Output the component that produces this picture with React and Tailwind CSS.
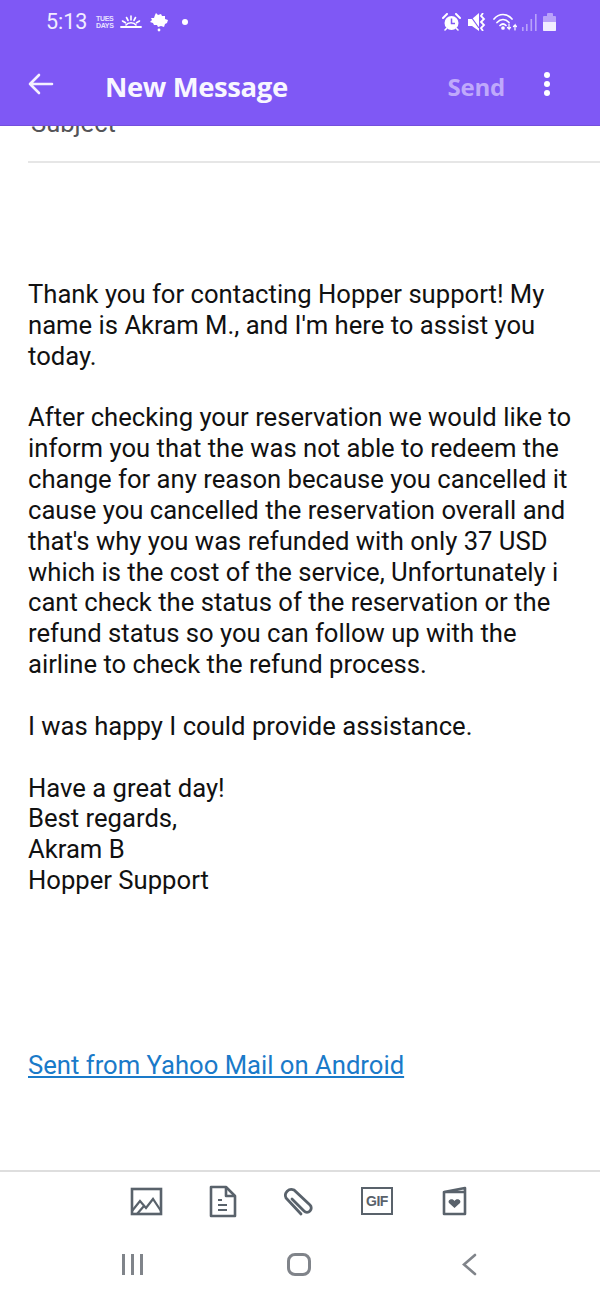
import React from 'react';

const bodyText = [
  ["Thank you for contacting Hopper support! My", "name is Akram M., and I'm here to assist you", "today."],
  [
    "After checking your reservation we would like to",
    "inform you that the was not able to redeem the",
    "change for any reason because you cancelled it",
    "cause you cancelled the reservation overall and",
    "that's why you was refunded with only 37 USD",
    "which is the cost of the service, Unfortunately i",
    "cant check the status of the reservation or the",
    "refund status so you can follow up with the",
    "airline to check the refund process.",
  ],
  ["I was happy I could provide assistance."],
  ["Have a great day!", "Best regards,", "Akram B", "Hopper Support"],
];

const StatusBar = () => (
  <div className="h-[44px] pl-[46px] pr-[44px] flex items-center justify-between text-white">
    <div className="flex items-center">
      <span className="text-[21.5px] leading-[28px] w-[51px] text-[#f1edff] font-['Roboto',sans-serif]">5:13</span>
      <div className="w-[17px] ml-[-1px] text-[7px] leading-[7.5px] font-bold text-right tracking-[-0.3px] font-['Liberation_Sans',sans-serif] text-[#e8e2ff]">
        <div>TUES</div>
        <div>DAYS</div>
      </div>
      {/* sunrise */}
      <svg className="ml-[7px]" width="22" height="14" viewBox="0 0 22 14" fill="none" stroke="white" strokeWidth="1.6" strokeLinecap="round">
        <path d="M11 1v4M6.5 2.5l1.6 3M15.5 2.5l-1.6 3M2.5 6l3 1.8M19.5 6l-3 1.8" />
        <path d="M6 10c2-3 8-3 10 0" />
        <path d="M1 12h20" strokeWidth="1.8" />
      </svg>
      {/* leaf */}
      <svg className="ml-[6px]" width="21" height="20" viewBox="0 0 21 20" fill="white">
        <path d="M8 1l2 2 3-1 1 2 3 0 0 3 3 1-1 3-2 1-1 3-3-1-3 1-1-2-3 0-1-2-3-1 2-2-1-2 3 0 1-3z" />
        <circle cx="11" cy="18" r="1.4" />
      </svg>
      <div className="ml-[13px] w-[6px] h-[6px] rounded-full bg-white" />
    </div>
    <div className="flex items-center">
      {/* alarm */}
      <svg width="19" height="19" viewBox="0 0 19 19">
        <circle cx="9.5" cy="10" r="7" fill="white" />
        <path d="M1 5l4-4M18 5l-4-4" stroke="white" strokeWidth="2" strokeLinecap="round" />
        <path d="M3 17l1.5-1.5M16 17l-1.5-1.5" stroke="white" strokeWidth="1.6" strokeLinecap="round" />
        <path d="M9.5 5.5v5h3.5" stroke="#7f58f5" strokeWidth="1.5" fill="none" />
      </svg>
      {/* mute vibrate */}
      <svg className="ml-[7px]" width="18" height="18" viewBox="0 0 18 18" fill="white">
        <path d="M0 6h4l7-6v18l-7-5H0z" />
        <path d="M1 1l10 14" stroke="#7f58f5" strokeWidth="1.2" />
        <path d="M15 0l-2 3 3 3-3 3 3 3-3 3 2 3" fill="none" stroke="white" strokeWidth="1.8" />
      </svg>
      {/* wifi */}
      <svg className="ml-[7px]" width="24" height="18" viewBox="0 0 24 18" fill="none" stroke="white" strokeWidth="1.7" strokeLinecap="round">
        <path d="M1 6c5-6 13-6 18 0M4 9.5c3.5-4 8.5-4 12 0M7 12.5c2-2 4-2 6 0" />
        <circle cx="10" cy="15" r="1" fill="white" />
        <path d="M16 11v5l-1.5-1.5M16 16l1.5-1.5M22 17v-5l-1.5 1.5M22 12l1.5 1.5" strokeWidth="1.2" />
      </svg>
      {/* signal */}
      <svg className="ml-[5px]" width="15" height="17" viewBox="0 0 15 17" fill="#b9a2fa">
        <rect x="0" y="13" width="1.6" height="4" />
        <rect x="4" y="10" width="1.6" height="7" />
        <rect x="8.5" y="5" width="1.6" height="12" />
        <rect x="13" y="0" width="1.6" height="17" />
      </svg>
      {/* battery */}
      <div className="ml-[6px] flex flex-col items-center">
        <div className="w-[6px] h-[3px] bg-[#b9a2fa] rounded-t-[1px]" />
        <div className="w-[13px] h-[15px] rounded-[1px] bg-[#b9a2fa] flex flex-col justify-end overflow-hidden">
          <div className="h-[9px] bg-[#f1edff]" />
        </div>
      </div>
    </div>
  </div>
);

const ComposeToolbar = () => (
  <div className="h-[66px] pl-[130px] flex items-start pt-[14px]">
    {/* image */}
    <svg width="33" height="30" viewBox="0 0 33 30" fill="none" stroke="#59626b" strokeWidth="2.6" className="mt-[1px]">
      <rect x="2" y="2" width="29" height="25" />
      <path d="M2 24l8-10 6 7 7-9 8 12M7 27l7-8" strokeWidth="2.2" />
    </svg>
    {/* file */}
    <svg width="28" height="33" viewBox="0 0 28 33" fill="none" stroke="#59626b" strokeWidth="2.6" strokeLinejoin="round" className="ml-[46px] mt-[-1px]">
      <path d="M2 2h15l9 9v20H2z" />
      <path d="M17 2v9h9" />
      <path d="M9 15h4M9 20h9M9 25h9" strokeWidth="2" />
    </svg>
    {/* clip */}
    <svg width="33" height="32" viewBox="0 0 33 32" fill="none" stroke="#59626b" strokeWidth="2.8" strokeLinecap="round" className="ml-[45px]">
      <path d="M10 13l12 12a4 4 0 0 0 6-6L12 4a6 6 0 0 0-8 8l15 16" />
    </svg>
    {/* gif */}
    <div className="ml-[46px] mt-[1px] w-[32px] h-[28px] border-[2.5px] border-[#59626b] flex items-center justify-center text-[14px] tracking-[-0.5px] font-bold text-[#59626b] font-['Liberation_Sans',sans-serif]">GIF</div>
    {/* card */}
    <svg width="25" height="30" viewBox="0 0 25 30" fill="none" stroke="#59626b" strokeWidth="2.6" strokeLinejoin="round" className="ml-[49px]">
      <path d="M2 6l21-4v4M2 6h21v22H2z" />
      <path d="M12.5 22l-5.5-5c-2-3 3.5-5.500 5.500-2 2-3.500 7.500-1 5.500 2z" fill="#59626b" stroke="none" />
    </svg>
  </div>
);

const NavBar = () => (
  <div className="h-[62px] flex items-start pt-[15px] pl-[122px]">
    <div className="flex gap-[6px] mt-[1px]">
      <div className="w-[3px] h-[21px] bg-[#80848a]" />
      <div className="w-[3px] h-[21px] bg-[#80848a]" />
      <div className="w-[3px] h-[21px] bg-[#80848a]" />
    </div>
    <div className="ml-[144px] w-[24px] h-[23px] border-[3px] border-[#80848a] rounded-[8px]" />
    <svg className="ml-[151px]" width="15" height="23" viewBox="0 0 15 23" fill="none" stroke="#80848a" strokeWidth="2.6" strokeLinecap="round">
      <path d="M13 2L2 11.5 13 21" />
    </svg>
  </div>
);

export default function App() {
  return (
    <div className="w-[600px] h-[1300px] overflow-hidden bg-white flex flex-col font-['Roboto',sans-serif]">
      {/* Header */}
      <div className="relative z-10 h-[126px] shrink-0 bg-[#7f58f5] border-b border-[#7450dc]">
        <StatusBar />
        <div className="h-[81px] pl-[28px] pr-[50px] flex items-center">
          <svg width="26" height="22" viewBox="0 0 26 22" fill="none" stroke="#f4f0ff" strokeWidth="2.6" strokeLinecap="round" strokeLinejoin="round" className="mt-[-2px]">
            <path d="M24 11H2M11 2l-9 9 9 9" />
          </svg>
          <h1 className="ml-[51px] mt-[4px] text-[27.5px] font-bold tracking-[-0.4px] text-[#f8f6ff] font-['Open_Sans',sans-serif]">New Message</h1>
          <span className="ml-auto mt-[4px] text-[24px] font-bold tracking-[-0.2px] text-[#bfa9fb] font-['Open_Sans',sans-serif]">Send</span>
          <div className="ml-[39px] flex flex-col gap-[3px] mt-[-2px]">
            <div className="w-[6px] h-[6px] rounded-full bg-white" />
            <div className="w-[6px] h-[6px] rounded-full bg-white" />
            <div className="w-[6px] h-[6px] rounded-full bg-white" />
          </div>
        </div>
      </div>

      {/* Subject */}
      <div className="ml-[28px] mt-[-16px] h-[53px] shrink-0 border-b-2 border-[#e6e6e6] pl-[3px] text-[25.5px] leading-[26px] text-[#555558]">
        Subject
      </div>

      {/* Message body */}
      <div className="flex-1 pt-[116px] pl-[28px] text-[25.65px] leading-[30.85px] text-[#111] whitespace-nowrap">
        {bodyText.map((para, i) => (
          <p key={i} className="mb-[30.85px]">
            {para.map((line) => (
              <span key={line} className="block">{line}</span>
            ))}
          </p>
        ))}
        <a href="#" className="block mt-[154px] text-[#1a7ac9] underline">Sent from Yahoo Mail on Android</a>
      </div>

      {/* Footer */}
      <div className="shrink-0 border-t-2 border-[#dedede]">
        <ComposeToolbar />
        <NavBar />
      </div>
    </div>
  );
}
